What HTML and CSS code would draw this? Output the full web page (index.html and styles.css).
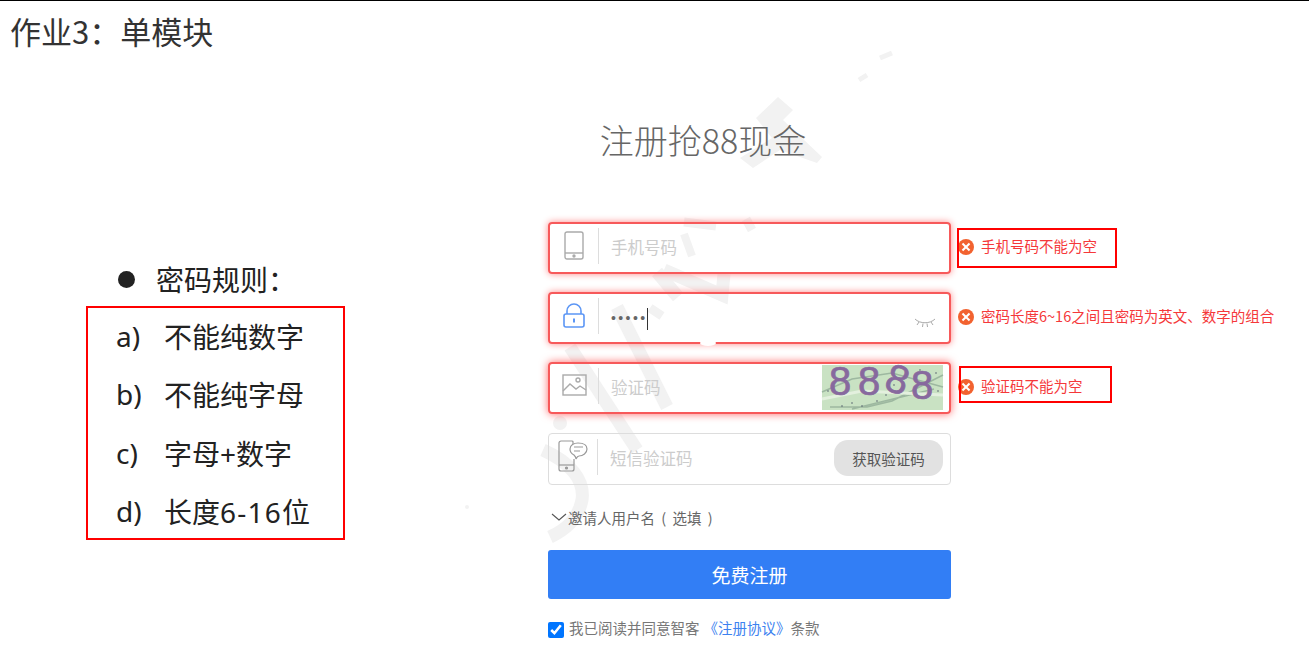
FILE: index.html
```html
<!DOCTYPE html>
<html lang="zh-CN">
<head>
    <meta charset="UTF-8">
    <meta name="viewport" content="width=device-width, initial-scale=1.0">
    <title>作业3：单模块</title>
    <link rel="stylesheet" href="styles.css">
</head>
<body>

<!-- 水印 -->
<svg class="watermark" width="1309" height="666" viewBox="0 0 1309 666" fill="none" stroke="#f2f2f2" stroke-width="13">
    <path d="M778 97L793 110L783 120L822 157L817 163L780 150L753 168L740 158L772 138L756 118Z" fill="#f2f2f2" stroke="none"/>
    <path d="M880 58L892 53M859 80L867 75" stroke-width="5"/>
    <path d="M684 222L716 226M746 219L752 230" stroke-width="9"/>
    <path d="M684 234L692 256" stroke-width="8"/>
    <path d="M657 272L678 297M664 270L722 295L724 274"/>
    <path d="M617 307L667 407"/>
    <path d="M650 308L662 316" stroke-width="9"/>
    <path d="M570 347L637 450"/>
    <path d="M543 450C570 462 585 480 582 500C578 520 565 530 550 537"/>
    <circle cx="560" cy="423" r="7" fill="#f2f2f2" stroke="none"/>
    <circle cx="467" cy="507" r="2" fill="#f2f2f2" stroke="none"/>
</svg>

<div class="slide-title">作业3：单模块</div>

<div class="page">
    <div class="rules">
        <div class="rules-head"><span class="dot"></span>密码规则：</div>
        <ul class="rules-list">
            <li><span class="letter">a)</span><span>不能纯数字</span></li>
            <li><span class="letter">b)</span><span>不能纯字母</span></li>
            <li><span class="letter">c)</span><span>字母+数字</span></li>
            <li><span class="letter">d)</span><span>长度<span class="nums">6-16</span>位</span></li>
        </ul>
    </div>

    <div class="register">
        <h2 class="reg-title">注册抢88现金</h2>

        <div class="row">
            <div class="field field-error">
                <span class="field-icon">
                    <svg width="20" height="29" viewBox="0 0 20 29" fill="none" stroke="#aaa" stroke-width="1.4">
                        <rect x="1" y="1" width="18" height="27" rx="2"/>
                        <path d="M1 22H19"/>
                        <circle cx="10" cy="25" r="1" fill="#aaa"/>
                    </svg>
                </span>
                <span class="placeholder">手机号码</span>
            </div>
            <div class="msg"><span class="err-icon"></span><span class="msg-text">手机号码不能为空</span></div>
            <span class="mark mark-phone"></span>
        </div>

        <div class="row">
            <div class="field field-error field-notch">
                <span class="field-icon">
                    <svg width="22" height="25" viewBox="0 0 22 25" fill="none" stroke="#5c96f5" stroke-width="1.6">
                        <path d="M4 11V8a7 7 0 0 1 14 0v3"/>
                        <rect x="1" y="11" width="20" height="13" rx="2"/>
                        <path d="M11 15.500v4" stroke-width="2"/>
                    </svg>
                </span>
                <span class="pwd">•••••</span><span class="caret"></span>
                <svg class="eye" width="22" height="12" viewBox="0 0 22 12" fill="none" stroke="#aaa" stroke-width="1">
                    <path d="M1 2C6 7 16 7 21 2"/>
                    <path d="M5 5L3 8M9 6.500L8.500 10M13 6.500L13.500 10M17 5L19 8"/>
                </svg>
            </div>
            <div class="msg"><span class="err-icon"></span><span class="msg-text">密码长度6~16之间且密码为英文、数字的组合</span></div>
        </div>

        <div class="row">
            <div class="field field-error field-strong">
                <span class="field-icon">
                    <svg width="25" height="22" viewBox="0 0 25 22" fill="none" stroke="#aaa" stroke-width="1.4">
                        <rect x="1" y="1" width="23" height="20"/>
                        <circle cx="16" cy="6" r="2"/>
                        <path d="M1 17L8 10L14 15L18 12L24 16"/>
                    </svg>
                </span>
                <span class="placeholder">验证码</span>
                <svg class="captcha" width="121" height="45" viewBox="0 0 121 45">
                    <rect width="121" height="45" fill="#c9e2c3"/>
                    <path d="M0 27L30 14L70 8L121 22M8 42H45L70 36L121 10M30 44L112 24" fill="none" stroke="#9db8a0" stroke-width="1.500"/>
                    <path d="M0 34L40 26L121 30" fill="none" stroke="#e3f0de" stroke-width="3"/>
                    <g fill="#56606e">
                        <circle cx="6" cy="26" r="0.800"/><circle cx="30" cy="38" r="0.800"/><circle cx="40" cy="41" r="0.800"/>
                        <circle cx="55" cy="36" r="0.800"/><circle cx="72" cy="20" r="0.800"/><circle cx="85" cy="6" r="0.800"/>
                        <circle cx="98" cy="5" r="0.800"/><circle cx="114" cy="8" r="0.800"/><circle cx="108" cy="30" r="0.800"/>
                        <circle cx="116" cy="26" r="0.800"/><circle cx="20" cy="41" r="0.800"/><circle cx="64" cy="30" r="0.800"/>
                    </g>
                    <text class="captcha-text" x="7" y="30">8</text>
                    <text class="captcha-text" x="36" y="30">8</text>
                    <text class="captcha-text" x="64" y="28" transform="rotate(18 75 16)">8</text>
                    <text class="captcha-text" x="89" y="34">8</text>
                </svg>
            </div>
            <div class="msg"><span class="err-icon"></span><span class="msg-text">验证码不能为空</span></div>
            <span class="mark mark-code"></span>
        </div>

        <div class="row row-sms">
            <div class="field">
                <span class="field-icon">
                    <svg width="30" height="32" viewBox="0 0 30 32" fill="none" stroke="#999" stroke-width="1.200">
                        <path d="M15 6V2a1 1 0 0 0-1-1H3a2 2 0 0 0-2 2v26a2 2 0 0 0 2 2h11a2 2 0 0 0 2-2V19"/>
                        <path d="M1 25H16"/>
                        <circle cx="8.500" cy="28" r="1" fill="#999"/>
                        <path d="M20 3c5 0 9 2 9 6s-4 7-8 7c-1 0-2 1-3 3c0-2-1-3-2-4c-2-1-4-3-4-6c0-4 4-6 8-6z" fill="#fff"/>
                        <path d="M16 7H25M16 11H22"/>
                    </svg>
                </span>
                <span class="placeholder">短信验证码</span>
                <button type="button" class="code-btn">获取验证码</button>
            </div>
        </div>

        <div class="invite">
            <svg width="16" height="8" viewBox="0 0 16 8" fill="none" stroke="#555" stroke-width="1.100">
                <path d="M1 1L8 7L15 1"/>
            </svg>
            <span>邀请人用户名 ( 选填 )</span>
        </div>

        <button type="button" class="submit">免费注册</button>

        <label class="agree">
            <input type="checkbox" checked>
            <span class="agree-text">我已阅读并同意智客<a href="#">《注册协议》</a>条款</span>
        </label>
    </div>
</div>

</body>
</html>
```

FILE: styles.css
```css
* {
    box-sizing: border-box;
}
body {
    margin: 0;
    height: 666px;
    overflow: hidden;
    border-top: 1px solid #000;
    background-color: #fff;
    font-family: "Noto Sans CJK SC", "Noto Sans", sans-serif;
    position: relative;
}
.watermark {
    position: absolute;
    left: 0;
    top: -1px;
    z-index: 0;
}
.slide-title {
    position: relative;
    height: 60px;
    padding: 8px 0 0 10px;
    font-size: 31px;
    line-height: 44px;
    color: #333;
}
.page {
    position: relative;
    display: flex;
}

/* 左边的规则 */
.rules {
    width: 548px;
    padding: 196px 0 0 86px;
    color: #222;
    font-family: "Noto Sans", "Noto Sans CJK SC", sans-serif;
    font-size: 28px;
}
.rules-head {
    display: flex;
    align-items: center;
    height: 44px;
    padding-left: 32px;
}
.dot {
    width: 17px;
    height: 17px;
    margin-right: 21px;
    border-radius: 50%;
    background-color: #222;
}
.rules-list {
    width: 259px;
    height: 234px;
    margin: 5px 0 0;
    padding: 0 0 0 28px;
    list-style: none;
    border: 2px solid #f00;
}
.rules-list li {
    display: flex;
    align-items: center;
    height: 58.300px;
    padding-bottom: 2px;
}
.letter {
    width: 48px;
}
.nums {
    letter-spacing: 1.200px;
}

/* 注册表单 */
.register {
    width: 761px;
}
.reg-title {
    width: 310px;
    margin: 48px 0 0;
    height: 113px;
    font-size: 34px;
    font-weight: 300;
    line-height: 62px;
    text-align: center;
    color: #666;
}
.row {
    position: relative;
    display: flex;
    align-items: center;
    height: 52px;
    margin-bottom: 18px;
}
.row-sms {
    margin-top: 19px;
}
.field {
    position: relative;
    display: flex;
    align-items: center;
    flex: none;
    width: 403px;
    height: 52px;
    border: 1px solid #ddd;
    border-radius: 4px;
    font-size: 16.500px;
}
.field-error {
    border: 2px solid #f7595a;
    box-shadow: 0 0 7px #ff8a8a;
}
.field-strong {
    box-shadow: 0 0 8px #ff6a6a;
}
.field-notch::after {
    content: "";
    position: absolute;
    left: 150px;
    bottom: -4px;
    width: 16px;
    height: 6px;
    border-radius: 50%;
    background-color: #fff;
}
.field-icon {
    display: flex;
    align-items: center;
    justify-content: center;
    flex: none;
    width: 49px;
    height: 36px;
    margin: 0 12px 4px 0;
    border-right: 1px solid #ddd;
}
.field-icon svg {
    margin-bottom: 2px;
}
.placeholder {
    padding-bottom: 3px;
    color: #ccc;
}
.pwd {
    color: #666;
    font-family: "Liberation Sans", sans-serif;
    font-size: 14px;
    letter-spacing: 2.400px;
}
.caret {
    width: 1px;
    height: 22px;
    margin: 2px 0 0 -1px;
    background-color: #333;
}
.eye {
    position: absolute;
    right: 13px;
    top: 23px;
}
.captcha {
    position: absolute;
    right: 6px;
    top: 1px;
    overflow: visible;
}
.captcha-text {
    font-family: "Liberation Sans", sans-serif;
    font-size: 40px;
    fill: #87699e;
    stroke: #87699e;
    stroke-width: 0.700px;
}
.code-btn {
    position: absolute;
    right: 7px;
    top: 6px;
    width: 109px;
    height: 36px;
    padding: 0;
    border: none;
    border-radius: 14px;
    background-color: #e2e2e2;
    color: #555;
    font-family: inherit;
    font-size: 14.500px;
}
.msg {
    display: flex;
    align-items: center;
    margin: 0 0 2px 7px;
    color: #f5383a;
    font-size: 14.500px;
    white-space: nowrap;
}
.msg-text {
    padding-bottom: 4px;
}
.err-icon {
    position: relative;
    width: 16px;
    height: 16px;
    margin-right: 7px;
    border-radius: 50%;
    background-color: #f2622f;
}
.err-icon::before,
.err-icon::after {
    content: "";
    position: absolute;
    left: 3px;
    top: 7px;
    width: 10px;
    height: 2px;
    background-color: #fff;
    transform: rotate(45deg);
}
.err-icon::after {
    transform: rotate(-45deg);
}
.mark {
    position: absolute;
    border: 2px solid #f00;
}
.mark-phone {
    left: 409px;
    top: 6px;
    width: 160px;
    height: 40px;
}
.mark-code {
    left: 411px;
    top: 4px;
    width: 153px;
    height: 37px;
}
.invite {
    display: flex;
    align-items: center;
    gap: 1px;
    height: 24px;
    margin: 20px 0 0 3px;
    color: #666;
    font-size: 14.500px;
    word-spacing: 3px;
}
.submit {
    display: block;
    width: 403px;
    height: 49px;
    margin-top: 21px;
    border: none;
    border-radius: 3px;
    background-color: #327ef5;
    color: #fff;
    font-family: inherit;
    font-size: 19px;
}
.agree {
    display: flex;
    align-items: center;
    height: 24px;
    margin-top: 17px;
    color: #777;
    font-size: 14.500px;
}
.agree input {
    width: 16px;
    height: 16px;
    margin: 4px 5px 0 0;
}
.agree-text {
    padding-bottom: 2px;
}
.agree a {
    margin-left: 4px;
    color: #3d82f0;
    text-decoration: none;
}
```
